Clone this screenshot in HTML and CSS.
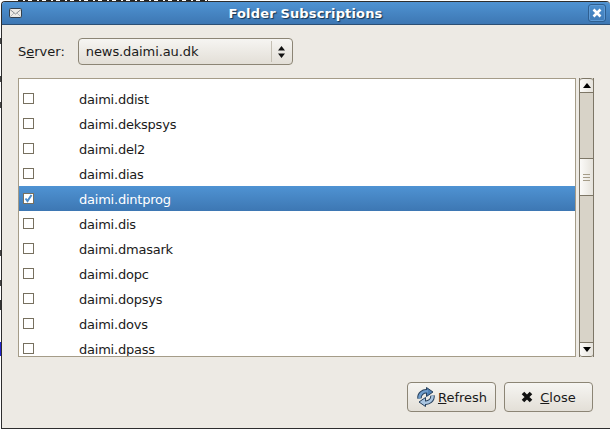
FILE: index.html
```html
<!DOCTYPE html>
<html lang="en">
<head>
<meta charset="utf-8">
<title>Folder Subscriptions</title>
<link rel="stylesheet" href="styles.css">
</head>
<body>
<div class="behind-top"></div>
<div class="behind-left"></div>
<div class="window">
  <header class="titlebar">
    <svg class="mail-icon" width="13" height="10" viewBox="0 0 13 10"><rect x="0.500" y="0.500" width="12" height="9" rx="1" fill="#eceae6" stroke="#33404d"/><path d="M1 1.500l5.500 4.500L12 1.500" fill="none" stroke="#8a8f94"/><path d="M1 9l4-4M12 9L8 5" fill="none" stroke="#b5b8ba"/></svg>
    <div class="title">Folder Subscriptions</div>
    <div class="close-box"><svg width="10" height="10" viewBox="0 0 10 10"><path d="M1.500 1.500l7 7M8.500 1.500l-7 7" stroke="#fff" stroke-width="2.600"/></svg></div>
  </header>
  <main class="content">
    <div class="server-row">
      <span class="label">S<u>e</u>rver:</span>
      <div class="combo">
        <span class="combo-text">news.daimi.au.dk</span>
        <span class="combo-sep"></span>
        <svg width="7" height="12" viewBox="0 0 7 12"><path d="M3.500 0L7 4.500H0zM3.500 12L0 7.500H7z" fill="#111"/></svg>
      </div>
    </div>
    <div class="list-row">
      <div class="list">
        <div class="row"><span class="check"></span><span class="name">daimi.ddist</span></div>
        <div class="row"><span class="check"></span><span class="name">daimi.dekspsys</span></div>
        <div class="row"><span class="check"></span><span class="name">daimi.del2</span></div>
        <div class="row"><span class="check"></span><span class="name">daimi.dias</span></div>
        <div class="row selected"><span class="check"><svg width="9" height="9" viewBox="0 0 9 9"><path d="M1.500 4.500l2 2.500L7.500 1" fill="none" stroke="#4a8ccb" stroke-width="2"/></svg></span><span class="name">daimi.dintprog</span></div>
        <div class="row"><span class="check"></span><span class="name">daimi.dis</span></div>
        <div class="row"><span class="check"></span><span class="name">daimi.dmasark</span></div>
        <div class="row"><span class="check"></span><span class="name">daimi.dopc</span></div>
        <div class="row"><span class="check"></span><span class="name">daimi.dopsys</span></div>
        <div class="row"><span class="check"></span><span class="name">daimi.dovs</span></div>
        <div class="row"><span class="check"></span><span class="name">daimi.dpass</span></div>
      </div>
      <div class="scrollbar">
        <div class="arrow arrow-up"><svg width="8" height="5" viewBox="0 0 8 5"><path d="M4 0l4 5H0z" fill="#000"/></svg></div>
        <div class="trough trough-top"></div>
        <div class="thumb"><i></i><i></i><i></i></div>
        <div class="trough"></div>
        <div class="arrow arrow-down"><svg width="8" height="5" viewBox="0 0 8 5"><path d="M4 5L0 0h8z" fill="#000"/></svg></div>
      </div>
    </div>
    <div class="actions">
      <div class="button">
        <svg width="20" height="20" viewBox="0 0 20 20">
          <path d="M3.500 11.500C3 7 7 3.500 12 4.500" fill="none" stroke="#27405c" stroke-width="4.500"/>
          <path d="M10.500 0.500l6.500 4.500-6.500 4.500z" fill="#4f80b5" stroke="#27405c"/>
          <path d="M3.500 11.500C3 7 7 3.500 12 4.500" fill="none" stroke="#6f9ccb" stroke-width="2.500"/>
          <path d="M16.500 8.500C17 13 13 16.500 8 15.500" fill="none" stroke="#27405c" stroke-width="4.500"/>
          <path d="M9.500 19.500L3 15l6.500-4.500z" fill="#a9c5e2" stroke="#27405c"/>
          <path d="M16.500 8.500C17 13 13 16.500 8 15.500" fill="none" stroke="#a9c5e2" stroke-width="2.500"/>
        </svg>
        <span class="btn-label"><u>R</u>efresh</span>
      </div>
      <div class="button">
        <svg width="12" height="12" viewBox="0 0 12 12"><path d="M2 2l8 8M10 2l-8 8" stroke="#111" stroke-width="3.600"/></svg>
        <span class="btn-label btn-label-wide"><u>C</u>lose</span>
      </div>
    </div>
  </main>
</div>
</body>
</html>
```
FILE: styles.css
```css
* { box-sizing: border-box; }
html, body { margin: 0; height: 100%; overflow: hidden; background: #fff; }
body { padding: 1px 0 0 1px; font-family: "DejaVu Sans", sans-serif; font-size: 13px; color: #1a1a1a; }
.behind-top { position: absolute; left: 18px; top: 0; width: 190px; height: 1px; background: repeating-linear-gradient(90deg, #222 0 5px, #fff 5px 7px, #222 7px 10px, #fff 10px 14px); }
.behind-left { position: absolute; left: 0; top: 30px; width: 1px; height: 340px; background: linear-gradient(#fff 0 8px, #444 8px 14px, #fff 14px 46px, #444 46px 52px, #fff 52px 72px, #444 72px 78px, #fff 78px 220px, #444 220px 226px, #fff 226px 250px, #444 250px 256px, #fff 256px 270px, #333 270px 280px, #fff 280px 312px, #22c 312px 326px, #fff 326px); }
.window { width: 609px; height: 428px; border: 1px solid #2e2e2e; border-right: 0; border-radius: 4px 4px 0 0; background: #edeae4; display: flex; flex-direction: column; overflow: hidden; }
.titlebar { height: 23px; flex: none; display: flex; align-items: center; padding: 0 4px 0 7px; background: linear-gradient(#4f93d3, #3d77b3); border-bottom: 1px solid #2c4f74; }
.mail-icon { flex: none; }
.title { flex: 1; text-align: center; color: #fff; font-weight: bold; font-size: 13px; letter-spacing: .15px; text-shadow: 1px 1px 1px #16324f; padding-left: 1px; }
.close-box { width: 18px; height: 18px; border: 1px solid #2f5f90; border-radius: 3px; box-shadow: inset 0 0 0 1px #5d9ad6; display: flex; align-items: center; justify-content: center; }
.content { flex: 1; display: flex; flex-direction: column; padding: 13px 16px 0 16px; min-height: 0; }
.server-row { display: flex; align-items: center; height: 27px; gap: 13px; }
.combo { width: 215px; height: 27px; border: 1px solid #8c8575; border-radius: 4px; background: linear-gradient(#f6f5f2, #e3dfd7); display: flex; align-items: center; padding: 0 7px 0 7px; letter-spacing: -.1px; }
.combo-text { flex: 1; }
.combo-sep { width: 1px; height: 21px; background: #c4bfb3; margin-right: 6px; }
.list-row { display: flex; margin-top: 13px; height: 279px; }
.list { width: 558px; height: 279px; border: 1px solid #a59c88; background: #fff; padding-top: 7px; overflow: hidden; }
.row { height: 25px; flex: none; display: flex; align-items: center; padding-left: 4px; }
.check { width: 11px; height: 11px; margin-top: -1px; border: 1px solid #77705f; background: #fff; display: flex; align-items: center; justify-content: center; flex: none; }
.name { margin-left: 45px; margin-top: 2px; letter-spacing: -.22px; }
.selected { background: linear-gradient(#4f93d3, #3d77b3); color: #fff; }
.scrollbar { width: 15px; margin-left: 3px; display: flex; flex-direction: column; height: 279px; border-left: 1px solid #7d7666; border-right: 1px solid #7d7666; background: #d8d3c8; }
.arrow { height: 15px; flex: none; display: flex; align-items: center; justify-content: center; background: linear-gradient(90deg, #fbfaf8, #e6e3dc); }
.arrow-up { border-top: 1px solid #7d7666; border-bottom: 1px solid #7d7666; border-radius: 3px 3px 0 0; }
.arrow-down { border-top: 1px solid #7d7666; border-bottom: 1px solid #7d7666; border-radius: 0 0 3px 3px; }
.trough { flex: 1; }
.trough-top { flex: none; height: 65px; }
.thumb { height: 38px; flex: none; display: flex; flex-direction: column; align-items: center; justify-content: center; gap: 2px; border-top: 1px solid #7d7666; border-bottom: 1px solid #7d7666; background: linear-gradient(90deg, #fbfaf8, #e6e3dc); }
.thumb i { width: 7px; height: 1px; background: #a59c88; }
.actions { display: flex; justify-content: flex-end; gap: 8px; margin-top: 25px; padding-right: 1px; }
.button { width: 89px; height: 30px; border: 1px solid #8c8575; border-radius: 4px; background: linear-gradient(#f6f5f2, #e3dfd7); display: flex; align-items: center; justify-content: center; gap: 2px; }
.btn-label-wide { margin-left: 5px; }
```
